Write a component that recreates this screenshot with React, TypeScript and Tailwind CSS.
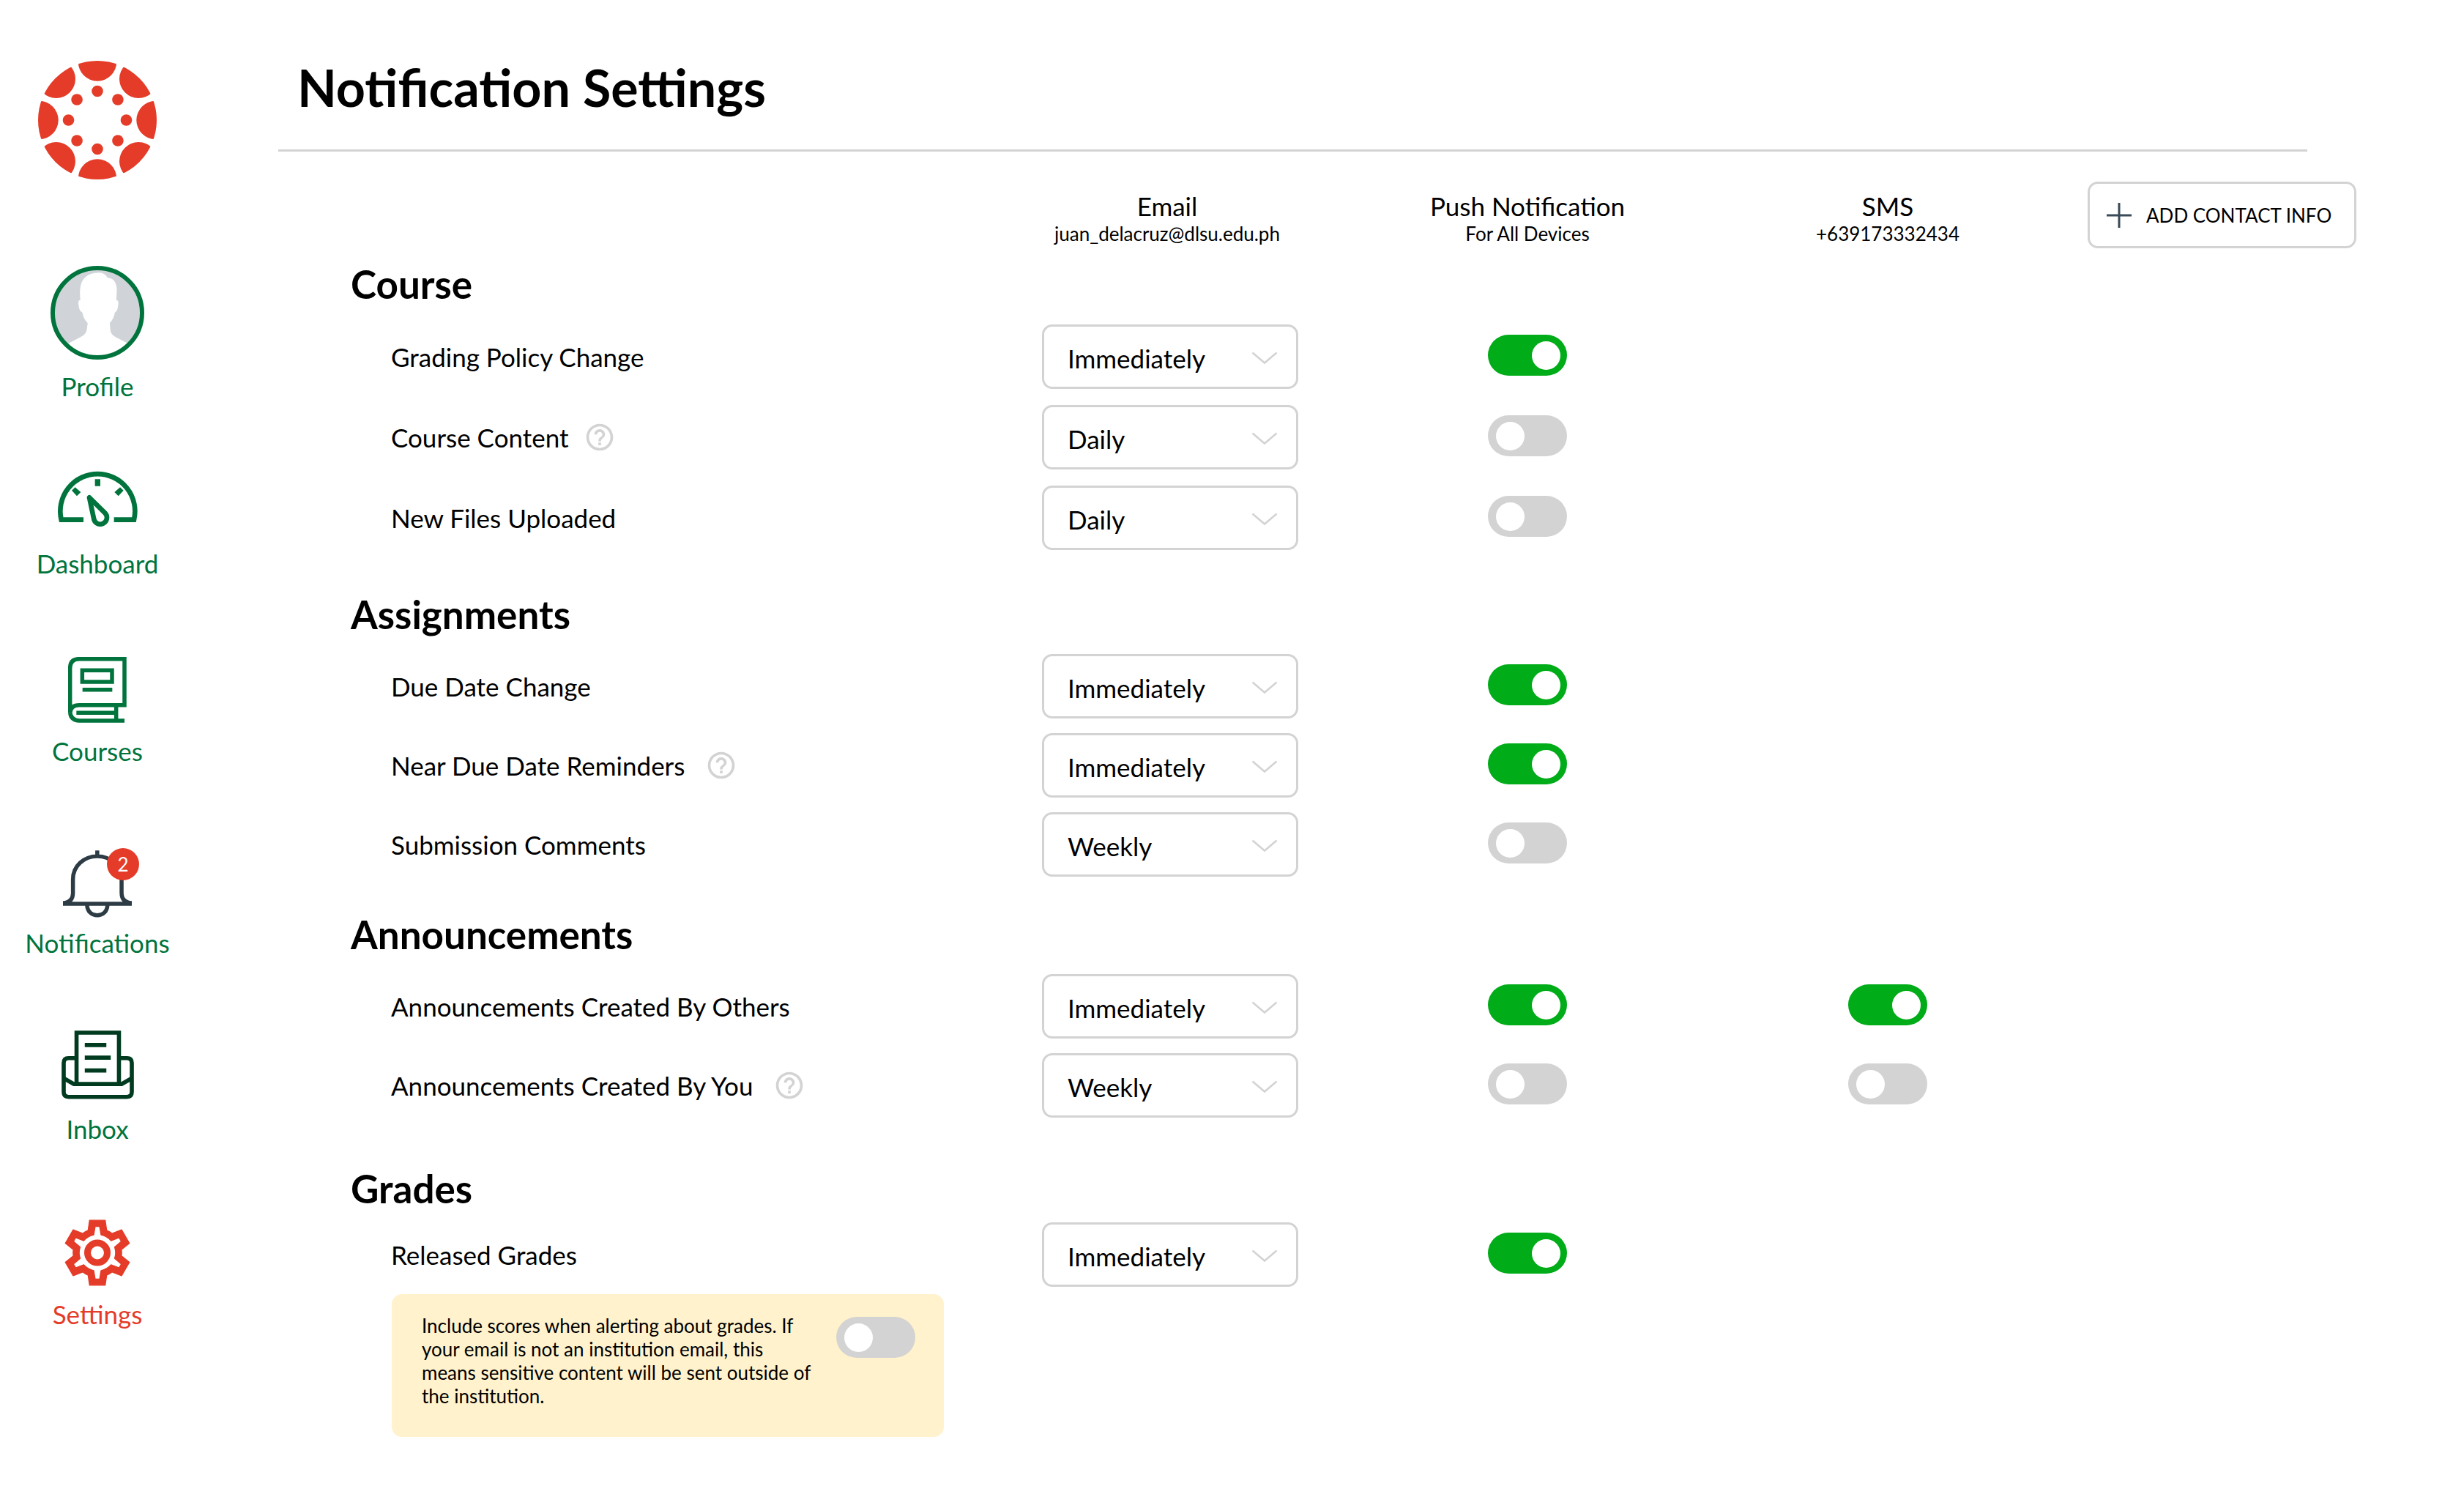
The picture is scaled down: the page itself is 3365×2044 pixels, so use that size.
import { useState } from "react";
import type { ReactNode } from "react";
import { MdHelpOutline } from "react-icons/md";

function CanvasLogo() {
  const angles = [0, 45, 90, 135, 180, 225, 270, 315];
  return (
    <svg viewBox="-81 -81 162 162" className="size-[162px] text-[#e43c29]" fill="currentColor" role="img" aria-label="Canvas">
      <clipPath id="logo-disc">
        <circle r="81" />
      </clipPath>
      <g clipPath="url(#logo-disc)">
        {angles.map((a) => (
          <circle key={a} cy="-79.5" r="26.2" transform={`rotate(${a})`} />
        ))}
      </g>
      {angles.map((a) => (
        <circle key={a} cy="-39.5" r="7.8" transform={`rotate(${a})`} />
      ))}
    </svg>
  );
}

function AvatarIcon() {
  return (
    <svg viewBox="204 939 386 386" className="size-32" aria-hidden="true">
      <clipPath id="avatar-disc">
        <circle cx="397" cy="1132" r="180" />
      </clipPath>
      <g clipPath="url(#avatar-disc)">
        <rect x="204" y="939" width="386" height="386" fill="#d0d4d9" />
        <path
          fill="#fff"
          d="M272 1262L330 1231Q353 1218 354 1198L357 1174Q340 1158 335 1131Q322 1126 319 1097Q317 1080 327 1080Q324 1056 326 1034Q332 968 405 967Q428 968 439 988Q474 990 477 1036L475 1080Q485 1080 483 1097Q481 1126 469 1131Q464 1158 448 1174L450 1202Q452 1222 472 1232L526 1260L560 1340H240Z"
        />
      </g>
      <circle cx="397" cy="1132" r="184" fill="none" stroke="#00743c" strokeWidth="18" />
    </svg>
  );
}

function DashboardIcon() {
  return (
    <svg viewBox="228 132 327 228" className="h-[76px] w-[109px]" aria-hidden="true">
      <g fill="none" stroke="currentColor" strokeWidth="20">
        <path d="M333 332H242A153 153 0 1 1 540 332H458" />
        <path strokeLinejoin="round" d="M357 241L375 326A27 27 0 1 0 421 304Z" />
      </g>
      <path fill="currentColor" d="M380 166H402V194H380ZM285 212L299 199L322 219L306 235ZM497 212L483 199L460 219L476 235Z" />
    </svg>
  );
}

function CoursesIcon() {
  return (
    <svg viewBox="268 894 240 270" className="h-[90px] w-20" fill="none" stroke="currentColor" strokeWidth="16.5" aria-hidden="true">
      <path d="M499 1155H314Q276 1153 276 1116V940Q276 902 314 902H499V1091H314Q278 1091 276 1124" />
      <path d="M326 949H448V996H326ZM327 1028H449M302 1123H465M465 1091V1155" />
    </svg>
  );
}

function BellIcon() {
  return (
    <svg viewBox="260 126 283 276" className="h-[92px] w-[94px] text-[#2d3b45]" fill="none" stroke="currentColor" strokeWidth="16.5" aria-hidden="true">
      <path d="M401 126V150M260 345H543M260 342Q301 340 301 300V245C301 190 346 150 401 150S501 190 501 245V300Q501 340 543 342" />
      <path d="M359 348C359 408 443 408 443 348" />
    </svg>
  );
}

function InboxIcon() {
  return (
    <svg viewBox="255 864 299 284" className="h-[94px] w-[99px] text-[#003b1f]" fill="none" stroke="currentColor" strokeWidth="17" aria-hidden="true">
      <path d="M317 1084V873H492V1084M351 924H440M351 976H458M351 1029H440" />
      <path d="M317 978H284Q264 978 264 998V1118Q264 1138 284 1138H525Q545 1138 545 1118V998Q545 978 525 978H492" />
      <path d="M264 1061L306 1085H503L545 1061" />
    </svg>
  );
}

type Point = [number, number];

function turn([x, y]: Point, degrees: number): string {
  const t = (degrees * Math.PI) / 180;
  const px = x * Math.cos(t) - y * Math.sin(t);
  const py = x * Math.sin(t) + y * Math.cos(t);
  return `${px.toFixed(1)} ${py.toFixed(1)}`;
}

// One tooth repeated every 60 degrees, joined by arcs of the given radius.
function gearOutline(tooth: Point[], radius: number): string {
  const parts = [0, 60, 120, 180, 240, 300].map((a, i) => {
    const [first, ...rest] = tooth.map((p) => turn(p, a));
    const lead = i === 0 ? `M${first}` : `A${radius} ${radius} 0 0 1 ${first}`;
    return lead + rest.map((p) => `L${p}`).join("");
  });
  return `${parts.join("")}A${radius} ${radius} 0 0 1 ${turn(tooth[0], 0)}Z`;
}

const gearPath =
  gearOutline([[-38, -92], [-32, -133], [32, -133], [38, -92]], 100) +
  gearOutline([[-15, -73], [-9, -108], [9, -108], [15, -73]], 75);

function GearIcon() {
  return (
    <svg viewBox="-135 -136 270 272" className="h-[91px] w-[90px]" aria-hidden="true">
      <path d={gearPath} fill="currentColor" fillRule="evenodd" stroke="currentColor" strokeWidth="4" strokeLinejoin="round" />
      <circle r="40.5" fill="none" stroke="currentColor" strokeWidth="27" />
    </svg>
  );
}

const bell = (
  <span className="relative block">
    <BellIcon />
    <span className="absolute -top-[3px] left-[60px] flex size-11 items-center justify-center rounded-full bg-[#e43c29] text-[26px] leading-none text-white">
      2
    </span>
  </span>
);

const navItems: { label: string; icon: ReactNode; className: string }[] = [
  { label: "Profile", icon: <AvatarIcon />, className: "mt-[118px] gap-3.5 text-[#00743c]" },
  { label: "Dashboard", icon: <DashboardIcon />, className: "mt-[94px] gap-7 text-[#00743c]" },
  { label: "Courses", icon: <CoursesIcon />, className: "mt-[106px] gap-4 text-[#00743c]" },
  { label: "Notifications", icon: bell, className: "mt-[114px] gap-3 text-[#00743c]" },
  { label: "Inbox", icon: <InboxIcon />, className: "mt-[98px] gap-[18px] text-[#00743c]" },
  { label: "Settings", icon: <GearIcon />, className: "mt-[102px] gap-4 text-[#e43c29]" },
];

function Toggle({ label, on }: { label: string; on: boolean }) {
  return (
    <input
      type="checkbox"
      role="switch"
      aria-label={label}
      defaultChecked={on}
      className="inline-flex h-14 w-[108px] shrink-0 cursor-pointer appearance-none items-center rounded-full bg-[#d3d3d3] pl-[11px] align-middle before:size-[39px] before:rounded-full before:bg-white before:content-[''] checked:bg-[#00ac18] checked:pl-[60px]"
    />
  );
}

function FrequencySelect({ label, initial }: { label: string; initial: string }) {
  const [value, setValue] = useState(initial);
  return (
    <span className="relative inline-block w-[350px] align-middle">
      <select
        aria-label={label}
        value={value}
        onChange={(e) => setValue(e.target.value)}
        className="block h-[88px] w-full appearance-none rounded-[14px] border-3 border-[#d3d3d3] bg-white pt-1 pr-20 pl-8 text-[35px] leading-[44px] text-black"
      >
        <option>Immediately</option>
        <option>Daily</option>
        <option>Weekly</option>
        <option>Off</option>
      </select>
      <svg viewBox="0 0 36 18" className="pointer-events-none absolute top-[37px] right-7 h-[18px] w-9" fill="none" stroke="#d3d3d3" strokeWidth="2.5" aria-hidden="true">
        <path d="M1.500 1.500L18 15.500L34.500 1.500" />
      </svg>
    </span>
  );
}

type Setting = { name: string; help?: string; email: string; push: boolean; sms?: boolean };

const sections: { title: string; headClass: string; rowClass: string; rows: Setting[] }[] = [
  {
    title: "Course",
    headClass: "h-[93px] pb-3",
    rowClass: "h-[110px]",
    rows: [
      { name: "Grading Policy Change", email: "Immediately", push: true },
      { name: "Course Content", help: "ml-5", email: "Daily", push: false },
      { name: "New Files Uploaded", email: "Daily", push: false },
    ],
  },
  {
    title: "Assignments",
    headClass: "h-[121px] pb-3",
    rowClass: "h-[108px]",
    rows: [
      { name: "Due Date Change", email: "Immediately", push: true },
      { name: "Near Due Date Reminders", help: "ml-7", email: "Immediately", push: true },
      { name: "Submission Comments", email: "Weekly", push: false },
    ],
  },
  {
    title: "Announcements",
    headClass: "h-[113px] pb-3",
    rowClass: "h-[108px]",
    rows: [
      { name: "Announcements Created By Others", email: "Immediately", push: true, sms: true },
      { name: "Announcements Created By You", help: "ml-7", email: "Weekly", push: false, sms: false },
    ],
  },
  {
    title: "Grades",
    headClass: "h-[123px] pb-1",
    rowClass: "h-[108px]",
    rows: [{ name: "Released Grades", email: "Immediately", push: true }],
  },
];

function SettingRow({ setting, rowClass }: { setting: Setting; rowClass: string }) {
  const { name, help, email, push, sms } = setting;
  return (
    <tr className={rowClass}>
      <th scope="row" className="pl-[154px] text-left text-[35px] leading-[44px] font-normal">
        <span className="flex items-center">
          {name}
          {help && (
            <button type="button" aria-label={`About ${name}`} className={help}>
              <MdHelpOutline className="size-11 text-[#d3d3d3]" />
            </button>
          )}
        </span>
      </th>
      <td className="pl-2 text-center">
        <FrequencySelect label={`${name} email frequency`} initial={email} />
      </td>
      <td className="pb-1 text-center">
        <Toggle label={`${name} push notification`} on={push} />
      </td>
      <td className="pb-1 text-center">
        {sms !== undefined && <Toggle label={`${name} SMS`} on={sms} />}
      </td>
      <td />
    </tr>
  );
}

function ColumnHead({ title, detail }: { title: string; detail: string }) {
  return (
    <th scope="col" className="p-0 pt-2.5 text-center font-normal">
      <span className="block text-[35px] leading-10">{title}</span>
      <span className="block text-[26px] leading-9">{detail}</span>
    </th>
  );
}

export default function App() {
  return (
    <div className="flex min-h-screen bg-white font-['Lato',sans-serif] text-black">
      <nav aria-label="Main" className="flex w-[266px] shrink-0 flex-col items-center pt-[83px]">
        <CanvasLogo />
        {navItems.map((item) => (
          <a key={item.label} href={`#${item.label.toLowerCase()}`} className={`flex flex-col items-center text-[35px] leading-[44px] ${item.className}`}>
            {item.icon}
            {item.label}
          </a>
        ))}
      </nav>

      <main className="min-w-0 flex-1 pr-[147px] pl-[114px]">
        <h1 className="pt-[75px] pl-[26px] text-[70px] leading-[88px] font-bold">Notification Settings</h1>
        <hr className="mt-[41px] mr-[67px] border-t-3 border-[#d3d3d3]" />

        <table className="mt-[41px] w-full table-fixed border-collapse">
          <colgroup>
            <col />
            <col className="w-[492px]" />
            <col className="w-[492px]" />
            <col className="w-[492px]" />
            <col className="w-[394px]" />
          </colgroup>
          <thead>
            <tr>
              <td />
              <ColumnHead title="Email" detail="juan_delacruz@dlsu.edu.ph" />
              <ColumnHead title="Push Notification" detail="For All Devices" />
              <ColumnHead title="SMS" detail="+639173332434" />
              <td className="p-0 text-right">
                <button type="button" className="inline-flex h-[91px] w-[367px] items-center gap-5 rounded-[14px] border-3 border-[#d3d3d3] pl-[23px] align-middle text-[26px] leading-9 whitespace-nowrap">
                  <svg viewBox="0 0 34 34" className="size-[34px] shrink-0" fill="none" stroke="#394b58" strokeWidth="3" aria-hidden="true">
                    <path d="M17 0V34M0 17H34" />
                  </svg>
                  ADD CONTACT INFO
                </button>
              </td>
            </tr>
          </thead>
          {sections.map((section) => (
            <tbody key={section.title}>
              <tr>
                <th scope="rowgroup" colSpan={5} className={`pl-[99px] text-left align-bottom text-[53px] leading-[64px] font-bold ${section.headClass}`}>
                  {section.title}
                </th>
              </tr>
              {section.rows.map((row) => (
                <SettingRow key={row.name} setting={row} rowClass={section.rowClass} />
              ))}
            </tbody>
          ))}
        </table>

        <div className="ml-[155px] flex w-[754px] items-start justify-between rounded-[14px] bg-[#fff2cc] pt-[27px] pr-[39px] pb-10 pl-[41px]">
          <p className="w-[540px] text-[26px] leading-8">
            Include scores when alerting about grades. If your email is not an institution email, this means sensitive content will be sent outside of the institution.
          </p>
          <div className="pt-1">
            <Toggle label="Include scores when alerting about grades" on={false} />
          </div>
        </div>
      </main>
    </div>
  );
}
